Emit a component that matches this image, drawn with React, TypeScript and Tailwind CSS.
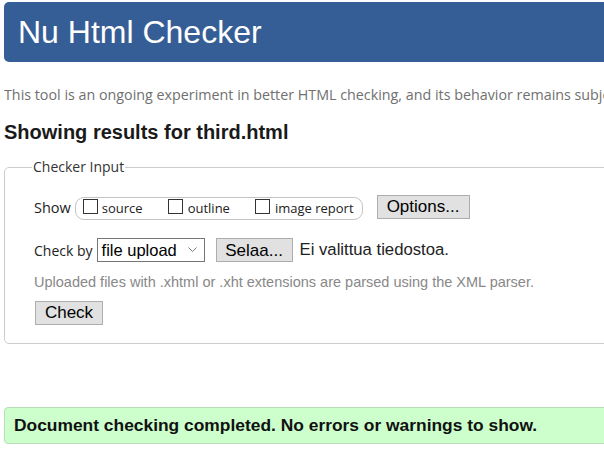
import React from "react";

const seg = { fontFamily: '"Open Sans", "Noto Sans", sans-serif' };
const ari = { fontFamily: '"Liberation Sans", Arial, sans-serif' };

function Box() {
  return <span className="inline-block w-[15px] h-[15px] border border-[#333] bg-white shrink-0 self-start mt-[1px]" />;
}

function Btn({ children, w }: { children: React.ReactNode; w: string }) {
  return (
    <span
      className={`inline-flex items-center justify-center h-[24px] ${w} bg-[#e1e1e1] border border-[#adadad] text-[17px] text-black`}
      style={ari}
    >
      {children}
    </span>
  );
}

export default function App() {
  return (
    <div className="w-[604px] h-[449px] overflow-hidden bg-white">
      <div className="w-[720px] pl-[4px] pt-[2px]">
        <div
          className="h-[60px] rounded-l-[5px] bg-[#365e96] pl-[14px] text-white text-[32px] leading-[60px]"
          style={ari}
        >
          Nu Html Checker
        </div>
        <p className="mt-[23px] w-[600px] overflow-hidden text-[14.3px] leading-[20px] text-[#707070] whitespace-nowrap" style={seg}>
          This tool is an ongoing experiment in better HTML checking, and its behavior remains subje
        </p>
        <h2 className="mt-[15px] text-[20px] leading-[24px] font-bold text-[#1a1a1a]" style={ari}>
          Showing results for third.html
        </h2>
        <fieldset className="mt-[13px] border border-[#cccccc] rounded-[5px] pl-[29px] pb-[18px]">
          <legend className="ml-[-2px] px-[1px] text-[14px] leading-[20px] text-[#333]" style={seg}>
            Checker Input
          </legend>
          <div className="mt-[19px] flex items-center h-[24px]">
            <span className="text-[14.5px] text-[#222]" style={seg}>Show</span>
            <span className="ml-[4px] h-[23px] flex items-center rounded-[9px] border border-[#c4c4c4] pl-[7px] pr-[8px] text-[13px] text-[#222]" style={seg}>
              <Box />
              <span className="ml-[4px] leading-[18px]">source</span>
              <span className="ml-[25px]" />
              <Box />
              <span className="ml-[5px] leading-[18px]">outline</span>
              <span className="ml-[25px]" />
              <Box />
              <span className="ml-[5px] leading-[18px]">image report</span>
            </span>
            <span className="ml-[14px] -mt-[3px]">
              <Btn w="w-[93px]">Options...</Btn>
            </span>
          </div>
          <div className="mt-[18px] flex items-center h-[24px]">
            <span className="text-[14px] text-[#222]" style={seg}>Check by</span>
            <span className="ml-[4px] relative h-[24px] w-[108px] border border-[#767676] bg-white flex items-center pl-[4px] text-[16.5px] text-black" style={ari}>
              file upload
              <svg className="absolute right-[7px] top-[8px]" width="9" height="6" viewBox="0 0 9 6">
                <path d="M0.5 0.5 L4.5 4.5 L8.5 0.5" fill="none" stroke="#777" strokeWidth="1" />
              </svg>
            </span>
            <span className="ml-[11px]">
              <Btn w="w-[77px]">Selaa...</Btn>
            </span>
            <span className="ml-[7px] text-[16.7px] text-[#222]" style={ari}>Ei valittua tiedostoa.</span>
          </div>
          <p className="mt-[11px] text-[14.5px] leading-[18px] text-[#888]" style={ari}>
            Uploaded files with .xhtml or .xht extensions are parsed using the XML parser.
          </p>
          <div className="mt-[9px] pl-[1px]">
            <Btn w="w-[68px]">Check</Btn>
          </div>
        </fieldset>
        <div
          className="mt-[63px] h-[37px] rounded-l-[4px] border border-[#b9dcb9] bg-[#ccffcc] pl-[9px] flex items-center text-[17.4px] font-bold text-[#111]"
          style={ari}
        >
          Document checking completed. No errors or warnings to show.
        </div>
      </div>
    </div>
  );
}
